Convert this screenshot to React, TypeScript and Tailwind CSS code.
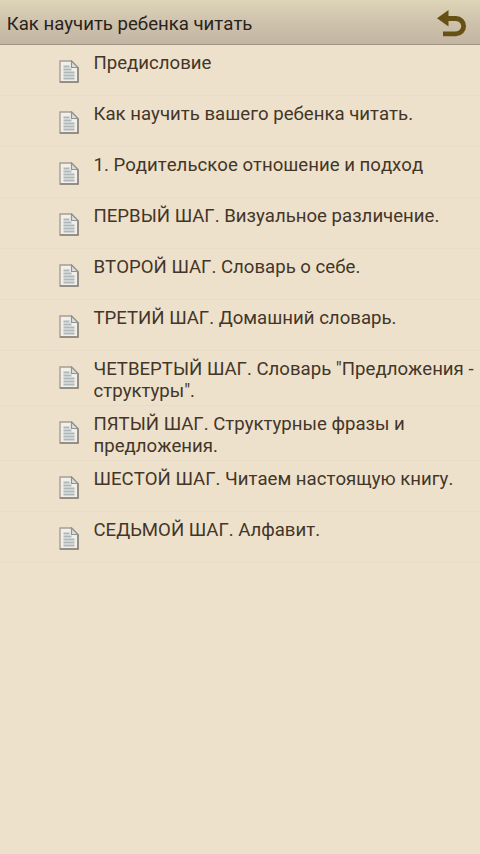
const chapters: string[][] = [
  ['Предисловие'],
  ['Как научить вашего ребенка читать.'],
  ['1. Родительское отношение и подход'],
  ['ПЕРВЫЙ ШАГ. Визуальное различение.'],
  ['ВТОРОЙ ШАГ. Словарь о себе.'],
  ['ТРЕТИЙ ШАГ. Домашний словарь.'],
  ['ЧЕТВЕРТЫЙ ШАГ. Словарь "Предложения -', 'структуры".'],
  ['ПЯТЫЙ ШАГ. Структурные фразы и', 'предложения.'],
  ['ШЕСТОЙ ШАГ. Читаем настоящую книгу.'],
  ['СЕДЬМОЙ ШАГ. Алфавит.'],
];

function PageIcon() {
  return (
    <svg viewBox="0 0 20 23" className="mt-[14.5px] h-[23px] w-5 shrink-0" fill="none">
      <path d="M1 1h11.5L19 7.5V22H1z" fill="#f1efe8" stroke="#a69e96" strokeWidth="1.4" />
      <path d="M12.5 1v6.5H19z" fill="#dde0de" stroke="#8f9391" strokeWidth="1.2" />
      <path d="M1 22h18V8" stroke="#8a827b" strokeWidth="1.5" />
      <path d="M4.5 6.5h6M4.5 9.5h8M4.5 12.5h11M4.5 15.5h11M4.5 18.5h11" stroke="#aeb8bc" strokeWidth="1.8" />
    </svg>
  );
}

function BackIcon() {
  return (
    <svg viewBox="0 0 32 28" className="mt-[3px] h-7 w-8" fill="none">
      <path d="M11 8.5h9a7.5 7.5 0 0 1 0 15.3H7" stroke="#675015" strokeWidth="4.8" />
      <path d="M1 8.2 12.5 0v16.4z" fill="#675015" />
    </svg>
  );
}

export default function App() {
  return (
    <div className="flex h-[854px] w-[480px] flex-col overflow-hidden bg-[#eee1cb] font-['Roboto','Noto_Sans',sans-serif] [font-kerning:none]">
      <header className="flex h-[45px] shrink-0 items-center justify-between border-b border-[#a09484] bg-linear-to-b from-[#ded5b8] via-[#cec2ad] to-[#c2b5a2] pr-3 pl-[6.7px]">
        <h1 className="mt-[4px] text-[18.6px] leading-[22px] whitespace-nowrap text-[#29221a]">Как научить ребенка читать</h1>
        <BackIcon />
      </header>
      <ul>
        {chapters.map((lines) => (
          <li
            key={lines[0]}
            className={`flex gap-[14.5px] border-b border-[#e8dcc9] pl-[59px] ${lines.length > 1 ? 'h-[55px]' : 'h-[51px]'}`}
          >
            <PageIcon />
            <div className="pt-[7px] text-[18.62px] leading-[22px] whitespace-nowrap text-[#433629]">
              {lines.map((line) => (
                <p key={line}>{line}</p>
              ))}
            </div>
          </li>
        ))}
      </ul>
    </div>
  );
}
